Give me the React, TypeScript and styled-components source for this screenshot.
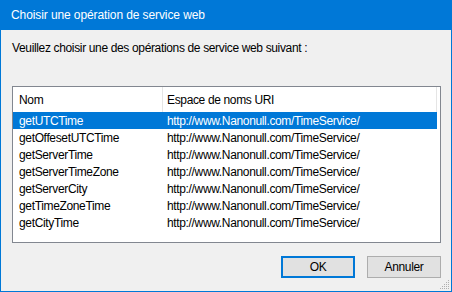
import React from "react";
import styled, { createGlobalStyle } from "styled-components";

const Global = createGlobalStyle`
  html, body { margin: 0; padding: 0; background: #f0f0f0; }
  * { box-sizing: border-box; }
`;

const Window = styled.div`
  width: 452px;
  height: 292px;
  border: 1px solid #0078d7;
  border-top: none;
  background: #f0f0f0;
  display: flex;
  flex-direction: column;
  font-family: "Liberation Sans", Arial, sans-serif;
  font-size: 12px;
  letter-spacing: -0.35px;
  color: #000;
  position: relative;
`;

const TitleBar = styled.div`
  height: 30px;
  flex: none;
  background: #0078d7;
  color: #fff;
  display: flex;
  align-items: center;
  padding-left: 10px;
  font-size: 12px;
  letter-spacing: -0.1px;
`;

const Body = styled.div`
  flex: 1;
  display: flex;
  flex-direction: column;
  padding: 11px 10px 0 11px;
`;

const Prompt = styled.div`
  height: 14px;
  line-height: 14px;
  margin-bottom: 31px;
`;

const ListBox = styled.div`
  width: 429px;
  height: 157px;
  border: 1px solid #828790;
  background: #fff;
  display: flex;
  flex-direction: column;
`;

const Header = styled.div`
  height: 25px;
  display: grid;
  grid-template-columns: 150px 274px;
`;

const HeadCell = styled.div<{ $pad: number }>`
  border-right: 1px solid #e5e5e5;
  padding-left: ${(p) => p.$pad}px;
  display: flex;
  align-items: center;
`;

const Row = styled.div<{ $selected?: boolean }>`
  height: 17px;
  width: 424px;
  display: grid;
  grid-template-columns: 151px 273px;
  align-items: center;
  background: ${(p) => (p.$selected ? "#0078d7" : "transparent")};
  color: ${(p) => (p.$selected ? "#fff" : "#000")};
`;

const Cell = styled.div<{ $pad: number }>`
  padding-left: ${(p) => p.$pad}px;
  white-space: nowrap;
`;

const Footer = styled.div`
  display: flex;
  justify-content: flex-end;
  gap: 12px;
  margin-top: 13px;
`;

const Button = styled.button<{ $default?: boolean }>`
  width: 74px;
  height: 22px;
  background: #e1e1e1;
  border: ${(p) => (p.$default ? "2px solid #0078d7" : "1px solid #adadad")};
  font-family: inherit;
  font-size: 12px;
  letter-spacing: inherit;
  color: #000;
  padding: 0;
  margin: 0;
`;

const Grip = styled.svg`
  position: absolute;
  right: 1px;
  bottom: 1px;
`;

const ops = [
  "getUTCTime",
  "getOffesetUTCTime",
  "getServerTime",
  "getServerTimeZone",
  "getServerCity",
  "getTimeZoneTime",
  "getCityTime",
];

export default function App() {
  return (
    <>
      <Global />
      <Window>
        <TitleBar>Choisir une opération de service web</TitleBar>
        <Body>
          <Prompt>Veuillez choisir une des opérations de service web suivant :</Prompt>
          <ListBox>
            <Header>
              <HeadCell $pad={6}>Nom</HeadCell>
              <HeadCell $pad={4}>Espace de noms URI</HeadCell>
            </Header>
            {ops.map((op, i) => (
              <Row key={op} $selected={i === 0}>
                <Cell $pad={6}>{op}</Cell>
                <Cell $pad={3}>http://www.Nanonull.com/TimeService/</Cell>
              </Row>
            ))}
          </ListBox>
          <Footer>
            <Button $default>OK</Button>
            <Button>Annuler</Button>
          </Footer>
        </Body>
        <Grip width="12" height="12" viewBox="0 0 12 12">
          <g fill="#b0b0b0">
            <rect x="10" y="2" width="1" height="1" />
            <rect x="8" y="4" width="1" height="1" />
            <rect x="10" y="4" width="1" height="1" />
            <rect x="6" y="6" width="1" height="1" />
            <rect x="8" y="6" width="1" height="1" />
            <rect x="10" y="6" width="1" height="1" />
            <rect x="4" y="8" width="1" height="1" />
            <rect x="6" y="8" width="1" height="1" />
            <rect x="8" y="8" width="1" height="1" />
            <rect x="10" y="8" width="1" height="1" />
            <rect x="2" y="10" width="1" height="1" />
            <rect x="4" y="10" width="1" height="1" />
            <rect x="6" y="10" width="1" height="1" />
            <rect x="8" y="10" width="1" height="1" />
            <rect x="10" y="10" width="1" height="1" />
          </g>
        </Grip>
      </Window>
    </>
  );
}
